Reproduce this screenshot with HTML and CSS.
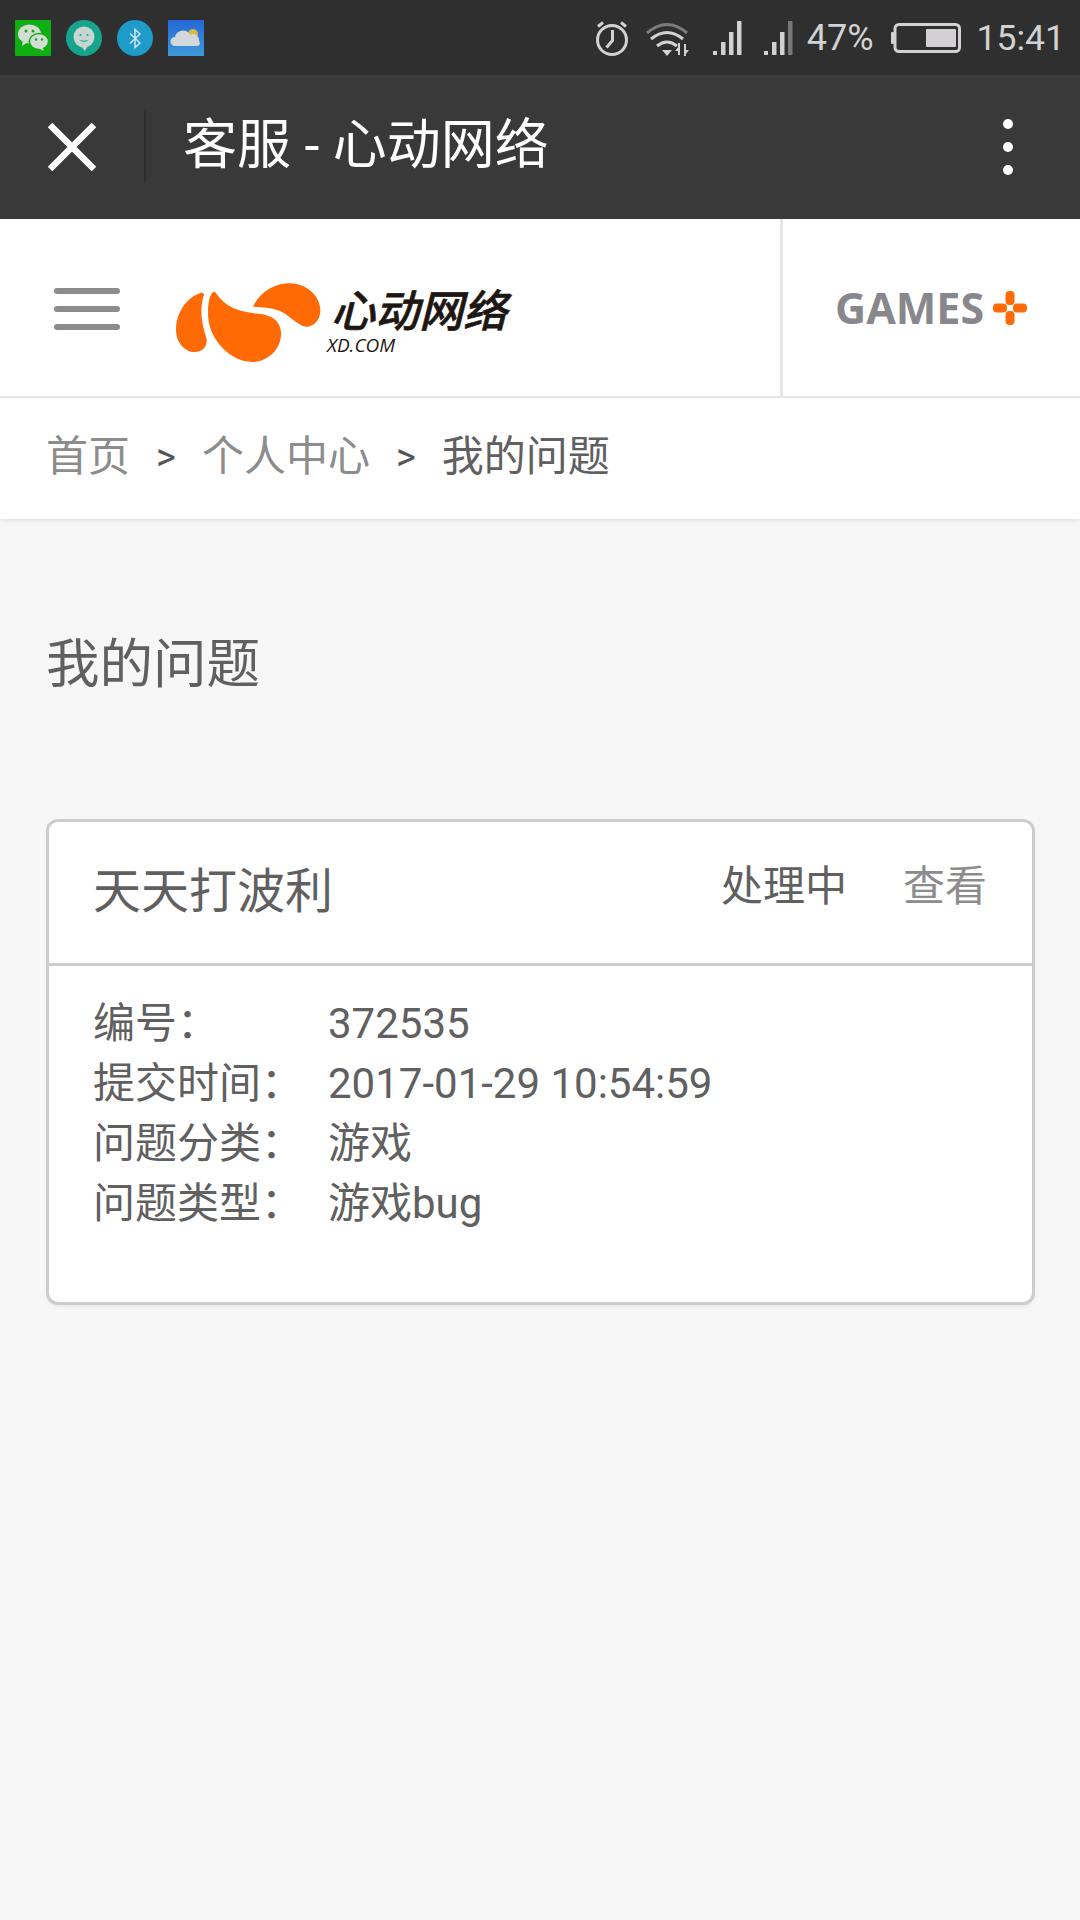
FILE: index.html
```html
<!DOCTYPE html>
<html lang="zh">
<head>
<meta charset="utf-8">
<title>客服 - 心动网络</title>
<link rel="stylesheet" href="styles.css">
</head>
<body>
<div class="statusbar">
  <div class="notif">
    <svg class="ni" viewBox="0 0 36 36"><rect width="36" height="36" rx="1" fill="#0fae12"/><ellipse cx="14.500" cy="14" rx="11.500" ry="9.500" fill="#d4dcd4"/><path d="M8 20l-1 6 6-4z" fill="#d4dcd4"/><ellipse cx="24" cy="21.500" rx="10.500" ry="8.500" fill="#0fae12"/><ellipse cx="24" cy="21.500" rx="8.800" ry="7.300" fill="#d4dcd4"/><path d="M27 27l2 4-6-3z" fill="#d4dcd4"/><circle cx="11" cy="11" r="1.500" fill="#0fae12"/><circle cx="18" cy="11" r="1.500" fill="#0fae12"/><circle cx="21" cy="19.500" r="1.200" fill="#0fae12"/><circle cx="27" cy="19.500" r="1.200" fill="#0fae12"/></svg>
    <svg class="ni" viewBox="0 0 36 36"><circle cx="18" cy="18" r="18" fill="#17a48c"/><circle cx="18" cy="17" r="10.500" fill="#c8d6d2"/><path d="M15 26l4 5 3-6z" fill="#c8d6d2"/><circle cx="14.500" cy="15" r="1" fill="#17a48c"/><circle cx="21.500" cy="15" r="1" fill="#17a48c"/><path d="M14.500 20.500q3.500 1.800 7 0" fill="none" stroke="#17a48c" stroke-width="1"/></svg>
    <svg class="ni" viewBox="0 0 36 36"><circle cx="18" cy="18" r="18" fill="#1e9bc9"/><path d="M13 13.500l10 9.500-5 4.500V9.500l5 4.500-10 9.500" fill="none" stroke="#cfe4ee" stroke-width="1.500"/></svg>
    <svg class="ni" viewBox="0 0 36 36"><defs><linearGradient id="sky" x1="0" y1="0" x2="0" y2="1"><stop offset="0" stop-color="#2567d6"/><stop offset="1" stop-color="#3f9ad8"/></linearGradient></defs><rect width="36" height="36" fill="url(#sky)"/><circle cx="25" cy="14" r="5" fill="#d9b84a"/><path d="M7 26a4.500 4.500 0 0 1 0-9 8 8 0 0 1 15-2 6 6 0 0 1 9 6 3 3 0 0 1-1 5z" fill="#d3d8dd"/></svg>
  </div>
  <div class="sys">
    <svg class="alarm" viewBox="0 0 34 36" fill="none" stroke="#d2d2d2" stroke-width="3"><circle cx="17" cy="20" r="14.500"/><path d="M17.500 10v10.500l-6 7"/><path d="M3 6.500l5-4M31 6.500l-5-4"/></svg>
    <svg class="wifi" viewBox="0 0 44 36" fill="none" stroke="#d2d2d2" stroke-width="3"><path d="M1 13q20-17 40 0" stroke="#7c7c7c"/><path d="M5 19q16-13 32 0M11 26q10-8 20 0"/><path d="M16 30h10l-5 6z" fill="#d2d2d2" stroke="none"/><path d="M33 23v12M39 36V24" stroke-width="2"/><path d="M29 31l4-5v5zM43 30l-4 5v-5z" fill="#d2d2d2" stroke="none"/></svg>
    <svg class="sig sig1" viewBox="0 0 29 34" fill="#d2d2d2"><rect x="0" y="30" width="4" height="4"/><rect x="8" y="21" width="4.500" height="13"/><rect x="16" y="11" width="4.500" height="23"/><rect x="24" y="0" width="4.500" height="34"/></svg>
    <svg class="sig sig2" viewBox="0 0 29 34" fill="#d2d2d2"><rect x="0" y="30" width="4" height="4"/><rect x="8" y="21" width="4.500" height="13"/><rect x="16" y="11" width="4.500" height="23"/><rect x="24" y="0" width="4.500" height="34" fill="#777"/></svg>
    <span class="pct">47%</span>
    <svg class="batt" viewBox="0 0 70 30"><rect x="0" y="9" width="3.500" height="12" rx="1" fill="#d2d2d2"/><rect x="4" y="1.500" width="64.500" height="27" rx="4" fill="none" stroke="#d2d2d2" stroke-width="3"/><rect x="35" y="6" width="30" height="18" rx="1" fill="#d2d0d2"/></svg>
    <span class="clock">15:41</span>
  </div>
</div>

<div class="toolbar">
  <svg class="close" viewBox="0 0 48 48" stroke="#fff" stroke-width="6.500" fill="none"><path d="M2 2l44 44M46 2L2 46"/></svg>
  <span class="vsep"></span>
  <h1 class="tb-title">客服 - 心动网络</h1>
  <span class="more"><i></i><i></i><i></i></span>
</div>

<header class="site">
  <div class="brand">
    <span class="burger"><i></i><i></i><i></i></span>
    <svg class="logo" viewBox="505 218 430 237" fill="#ff6a05">
      <path d="M585 249C556 254 510 292 508 355C507 400 538 425 565 423C590 422 603 400 596 380C584 340 575 300 590 254Z"/>
      <path d="M618 247C606 252 600 282 602 320C606 390 670 452 730 452C780 452 818 410 815 365C812 325 780 312 740 310C690 305 650 290 626 252Q622 246 618 247Z"/>
      <path d="M733 290C755 245 800 222 840 222C890 222 932 260 930 305C928 335 905 352 885 348C860 342 840 315 810 302C785 292 755 292 733 290Z"/>
    </svg>
    <div class="wordmark">
      <span class="wm-cn">心动网络</span>
      <span class="wm-en">XD.COM</span>
    </div>
  </div>
  <div class="games">
    <span class="games-t">GAMES</span>
    <svg class="plus" viewBox="0 0 34 34" fill="#ff6a05"><rect x="12.500" y="0" width="9" height="14" rx="4"/><rect x="12.500" y="20" width="9" height="14" rx="4"/><rect x="0" y="12.500" width="14" height="9" rx="4"/><rect x="20" y="12.500" width="14" height="9" rx="4"/></svg>
  </div>
</header>

<nav class="crumbs">
  <a class="c-link">首页</a><span class="c-sep">&gt;</span><a class="c-link">个人中心</a><span class="c-sep">&gt;</span><span class="c-cur">我的问题</span>
</nav>

<main class="content">
  <h2 class="page-title">我的问题</h2>
  <section class="card">
    <div class="card-head">
      <span class="card-title">天天打波利</span>
      <span class="card-state">处理中</span>
      <a class="card-view">查看</a>
    </div>
    <div class="card-body">
      <div class="row"><span class="lbl">编号：</span><span>372535</span></div>
      <div class="row"><span class="lbl">提交时间：</span><span>2017-01-29 10:54:59</span></div>
      <div class="row"><span class="lbl">问题分类：</span><span>游戏</span></div>
      <div class="row"><span class="lbl">问题类型：</span><span>游戏bug</span></div>
    </div>
  </section>
</main>
</body>
</html>
```

FILE: styles.css
```css
* { box-sizing: border-box; margin: 0; padding: 0; }
html, body { width: 1080px; height: 1920px; overflow: hidden; }
body {
  background: #f7f7f7;
  font-family: Roboto, "Noto Sans CJK SC", sans-serif;
  color: #606060;
}
svg { display: block; flex: none; }

.statusbar {
  height: 75px;
  background: #2f2f2f;
  display: flex;
  align-items: center;
  justify-content: space-between;
  padding: 0 15px 0 15px;
  color: #d2d2d2;
}
.notif { display: flex; gap: 15px; }
.ni { width: 36px; height: 36px; }
.sys { display: flex; align-items: center; }
.alarm { width: 34px; height: 36px; }
.wifi { width: 44px; height: 36px; margin-left: 17px; }
.sig { width: 29px; height: 34px; }
.sig1 { margin-left: 23px; }
.sig2 { margin-left: 22px; }
.pct { font-size: 36px; margin-left: 14px; line-height: 42px; }
.batt { width: 70px; height: 30px; margin-left: 17px; }
.clock { font-size: 35.500px; margin-left: 16px; line-height: 42px; }

.toolbar {
  height: 144px;
  background: #393939;
  display: flex;
  align-items: center;
  padding: 0 0 0 48px;
}
.close { width: 48px; height: 48px; }
.vsep { width: 2px; height: 72px; background: #2e2e2e; margin-left: 48px; }
.tb-title {
  font-size: 54px;
  font-weight: 400;
  line-height: 64px;
  color: #fff;
  margin: 0 0 2px 37px;
  flex: 1;
}
.more { display: flex; flex-direction: column; gap: 13px; margin-right: 67px; }
.more i { width: 10px; height: 10px; border-radius: 50%; background: #fff; }

.site {
  height: 179px;
  background: #fff;
  border-bottom: 2px solid #e6e6e6;
  display: flex;
  align-items: stretch;
}
.brand { flex: 1; display: flex; align-items: center; padding-left: 54px; }
.burger { display: flex; flex-direction: column; gap: 12px; width: 66px; margin-top: 2px; }
.burger i { height: 6px; border-radius: 3px; background: #8c8c8c; }
.logo { width: 147px; height: 81px; margin-left: 55px; margin-top: 30px; }
.wordmark { display: flex; flex-direction: column; margin-left: 5px; margin-top: 28px; }
.wm-cn {
  font-size: 44px;
  line-height: 46px;
  font-weight: 500;
  font-style: italic;
  color: #1e1612;
  -webkit-text-stroke: 0.6px #1e1612;
  margin-left: 4px;
  white-space: nowrap;
}
.wm-en {
  font-family: "Open Sans", sans-serif;
  font-size: 19px;
  line-height: 20px;
  font-style: italic;
  color: #1e1612;
  white-space: nowrap;
}
.games {
  width: 300px;
  border-left: 3px solid #e6e6e6;
  display: flex;
  align-items: center;
  padding-left: 52px;
}
.games-t {
  font-family: "Open Sans", sans-serif;
  font-weight: 700;
  font-size: 43px;
  color: #88888c;
}
.plus { width: 34px; height: 34px; margin-left: 9px; }

.crumbs {
  height: 121px;
  background: #fff;
  box-shadow: 0 2px 4px rgba(0,0,0,.09);
  display: flex;
  align-items: center;
  padding: 0 0 4px 46px;
  font-size: 42px;
  line-height: 60px;
  white-space: nowrap;
}
.c-link { color: #8c8c8c; }
.c-cur { color: #606060; }
.c-sep { color: #555; font-size: 38px; margin: 0 26px 0 26px; }

.content { padding: 0 45px 0 46px; }
.page-title { font-size: 53.500px; font-weight: 400; line-height: 72px; margin-top: 110px; }
.card {
  margin-top: 118px;
  height: 486px;
  background: #fff;
  border: 3px solid #cdcdcd;
  border-radius: 12px;
  box-shadow: 0 2px 3px rgba(0,0,0,.05);
}
.card-head {
  height: 144px;
  border-bottom: 3px solid #cdcdcd;
  display: flex;
  align-items: flex-start;
  padding: 0 45px 0 44px;
}
.card-title { font-size: 48px; line-height: 60px; margin-top: 40px; flex: 1; }
.card-state { font-size: 42px; line-height: 60px; margin-top: 35px; }
.card-view { font-size: 42px; line-height: 60px; margin-top: 35px; margin-left: 56px; color: #8c8c8c; }
.card-body { padding: 28px 45px 0 44px; }
.row { display: flex; font-size: 42px; line-height: 60px; white-space: nowrap; }
.lbl { width: 235px; flex: none; }
```
